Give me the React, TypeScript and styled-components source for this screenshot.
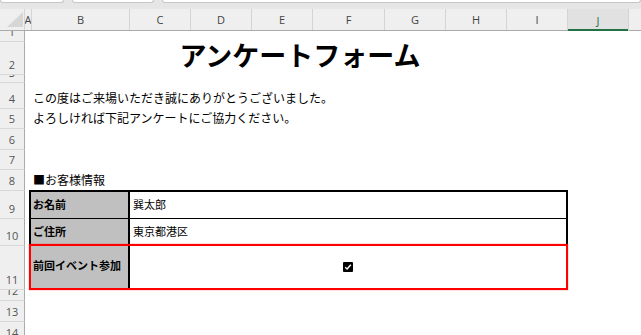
import styled, { createGlobalStyle } from 'styled-components';

const GlobalStyle = createGlobalStyle`
  html, body {
    margin: 0;
    padding: 0;
    background: #fff;
  }
  body {
    width: 641px;
    height: 335px;
    overflow: hidden;
    font-family: 'Noto Sans CJK JP', 'Noto Sans', sans-serif;
  }
`;

const COLS = [
  { name: 'A', w: 7 },
  { name: 'B', w: 98 },
  { name: 'C', w: 61 },
  { name: 'D', w: 61 },
  { name: 'E', w: 61 },
  { name: 'F', w: 72 },
  { name: 'G', w: 61 },
  { name: 'H', w: 61 },
  { name: 'I', w: 61 },
  { name: 'J', w: 61 },
  { name: 'K', w: 61 },
];
const ROWS = [11, 33, 8, 26, 20, 21, 20, 21, 28, 27, 44, 11, 21, 21];

export default function App() {
  return (
    <>
      <GlobalStyle />
      <Window>
        <TopStrip>
          <TopBox $w={62} />
          <TopBox $w={80} />
          <TopBox $w={466} />
        </TopStrip>

        <ColHeader>
          <Corner>
            <svg width="16" height="15" viewBox="0 0 16 15">
              <polygon points="0,15 16,15 16,0" fill="#d6d6d6" />
            </svg>
          </Corner>
          {COLS.map((c) => (
            <ColHead key={c.name} $w={c.w} $selected={c.name === 'J'}>
              {c.name}
            </ColHead>
          ))}
        </ColHeader>

        <Sheet>
          {ROWS.map((_, i) => (
            <RowHead key={i} $row={i + 1}>
              <span>{i + 1}</span>
            </RowHead>
          ))}

          <Title $row={2}>アンケートフォーム</Title>
          <TextCell $row={4}>この度はご来場いただき誠にありがとうございました。</TextCell>
          <TextCell $row={5}>よろしければ下記アンケートにご協力ください。</TextCell>
          <TextCell $row={8}>■お客様情報</TextCell>

          <Table>
            <TableRow $h={27} $line>
              <Label>お名前</Label>
              <Value>巽太郎</Value>
            </TableRow>
            <TableRow $h={25}>
              <Label>ご住所</Label>
              <Value>東京都港区</Value>
            </TableRow>
            <TableRow $h={44} $highlight>
              <Label>前回イベント参加</Label>
              <Value $center>
                <CheckBox>
                  <svg width="8" height="8" viewBox="0 0 8 8">
                    <path d="M1.2 4.3 L3.1 6 L6.8 1.8" fill="none" stroke="#fff" strokeWidth="1.4" />
                  </svg>
                </CheckBox>
              </Value>
            </TableRow>
          </Table>
        </Sheet>
      </Window>
    </>
  );
}

const Window = styled.div`
  width: 641px;
  height: 335px;
  overflow: hidden;
  display: flex;
  flex-direction: column;
  background: #fff;
`;

const TopStrip = styled.div`
  height: 9px;
  flex-shrink: 0;
  background: #e6e6e6;
  display: flex;
  gap: 8px;
  align-items: flex-start;
`;

const TopBox = styled.div<{ $w: number }>`
  width: ${({ $w }) => $w}px;
  height: 2px;
  background: #fff;
  border: 1px solid #c6c6c6;
  border-top: none;
  border-radius: 0 0 3px 3px;
  &:last-child {
    flex: 1;
  }
`;

const ColHeader = styled.div`
  height: 22px;
  flex-shrink: 0;
  display: flex;
  box-sizing: border-box;
  background: #efefef;
  border-bottom: 1px solid #ababab;
`;

const Corner = styled.div`
  width: 25px;
  flex-shrink: 0;
  box-sizing: border-box;
  border-right: 1px solid #d4d4d4;
  display: flex;
  align-items: flex-end;
  justify-content: flex-end;
  padding: 0 1px 3px 0;
`;

const ColHead = styled.div<{ $w: number; $selected?: boolean }>`
  width: ${({ $w }) => $w}px;
  flex-shrink: 0;
  box-sizing: border-box;
  border-right: 1px solid #d4d4d4;
  display: flex;
  align-items: center;
  justify-content: center;
  overflow: hidden;
  font-family: 'Open Sans', 'Liberation Sans', sans-serif;
  font-size: 11px;
  color: ${({ $selected }) => ($selected ? '#217346' : '#444')};
  background: ${({ $selected }) => ($selected ? '#e1e1e1' : 'transparent')};
  box-shadow: ${({ $selected }) => ($selected ? 'inset 0 -2px 0 #217346' : 'none')};
  margin-bottom: ${({ $selected }) => ($selected ? '-1px' : '0')};
`;

const Sheet = styled.div`
  display: grid;
  grid-template-columns: 25px ${COLS.map((c) => c.w + 'px').join(' ')};
  grid-template-rows: ${ROWS.map((h) => h + 'px').join(' ')};
  flex-shrink: 0;
`;

const RowHead = styled.div<{ $row: number }>`
  grid-column: 1;
  grid-row: ${({ $row }) => $row};
  box-sizing: border-box;
  background: #efefef;
  border-right: 1px solid #ababab;
  border-bottom: 1px solid #d8d8d8;
  display: flex;
  align-items: flex-end;
  justify-content: center;
  overflow: hidden;
  padding-bottom: 2px;
  font-family: 'Open Sans', 'Liberation Sans', sans-serif;
  font-size: 11px;
  line-height: 14px;
  color: #555;

  span {
    flex-shrink: 0;
  }
`;

const TextCell = styled.div<{ $row: number }>`
  grid-column: 3 / 11;
  grid-row: ${({ $row }) => $row};
  display: flex;
  align-items: flex-end;
  padding: 0 0 3px 1px;
  font-size: 12px;
  line-height: 16px;
  color: #000;
  white-space: nowrap;
`;

const Title = styled.div<{ $row: number }>`
  grid-column: 3 / 11;
  grid-row: ${({ $row }) => $row};
  display: flex;
  align-items: center;
  justify-content: center;
  padding-bottom: 8px;
  font-size: 27px;
  font-weight: 700;
  line-height: 30px;
  color: #000;
  white-space: nowrap;
`;

const Table = styled.div`
  grid-column: 3 / 11;
  grid-row: 9 / 12;
  align-self: start;
  margin: -1px 0 0 -3px;
  box-sizing: border-box;
  border: 2px solid #000;
  display: flex;
  flex-direction: column;
`;

const TableRow = styled.div<{ $h: number; $line?: boolean; $highlight?: boolean }>`
  height: ${({ $h }) => $h}px;
  box-sizing: border-box;
  display: flex;
  position: relative;
  border-bottom: ${({ $line }) => ($line ? '1px solid #000' : 'none')};

  ${({ $highlight }) =>
    $highlight &&
    `
    &::after {
      content: '';
      position: absolute;
      top: 0;
      left: -2px;
      right: -2px;
      bottom: -2px;
      border: 2px solid #ff0000;
      box-shadow: 0 0 1px rgba(255, 0, 0, 0.7);
      pointer-events: none;
    }
  `}
`;

const Label = styled.div`
  width: 99px;
  flex-shrink: 0;
  box-sizing: border-box;
  background: #c0c0c0;
  border-right: 2px solid #000;
  display: flex;
  align-items: center;
  padding: 0 0 2px 2px;
  font-size: 11px;
  font-weight: 700;
  color: #000;
  white-space: nowrap;
  overflow: hidden;
`;

const Value = styled.div<{ $center?: boolean }>`
  flex: 1;
  display: flex;
  align-items: center;
  justify-content: ${({ $center }) => ($center ? 'center' : 'flex-start')};
  padding: 0 0 2px ${({ $center }) => ($center ? '0' : '3px')};
  font-size: 11px;
  color: #000;
  white-space: nowrap;
`;

const CheckBox = styled.span`
  width: 10px;
  height: 10px;
  box-sizing: border-box;
  background: #000;
  border-radius: 1px;
  display: flex;
  align-items: center;
  justify-content: center;
  margin-top: 3px;
`;
